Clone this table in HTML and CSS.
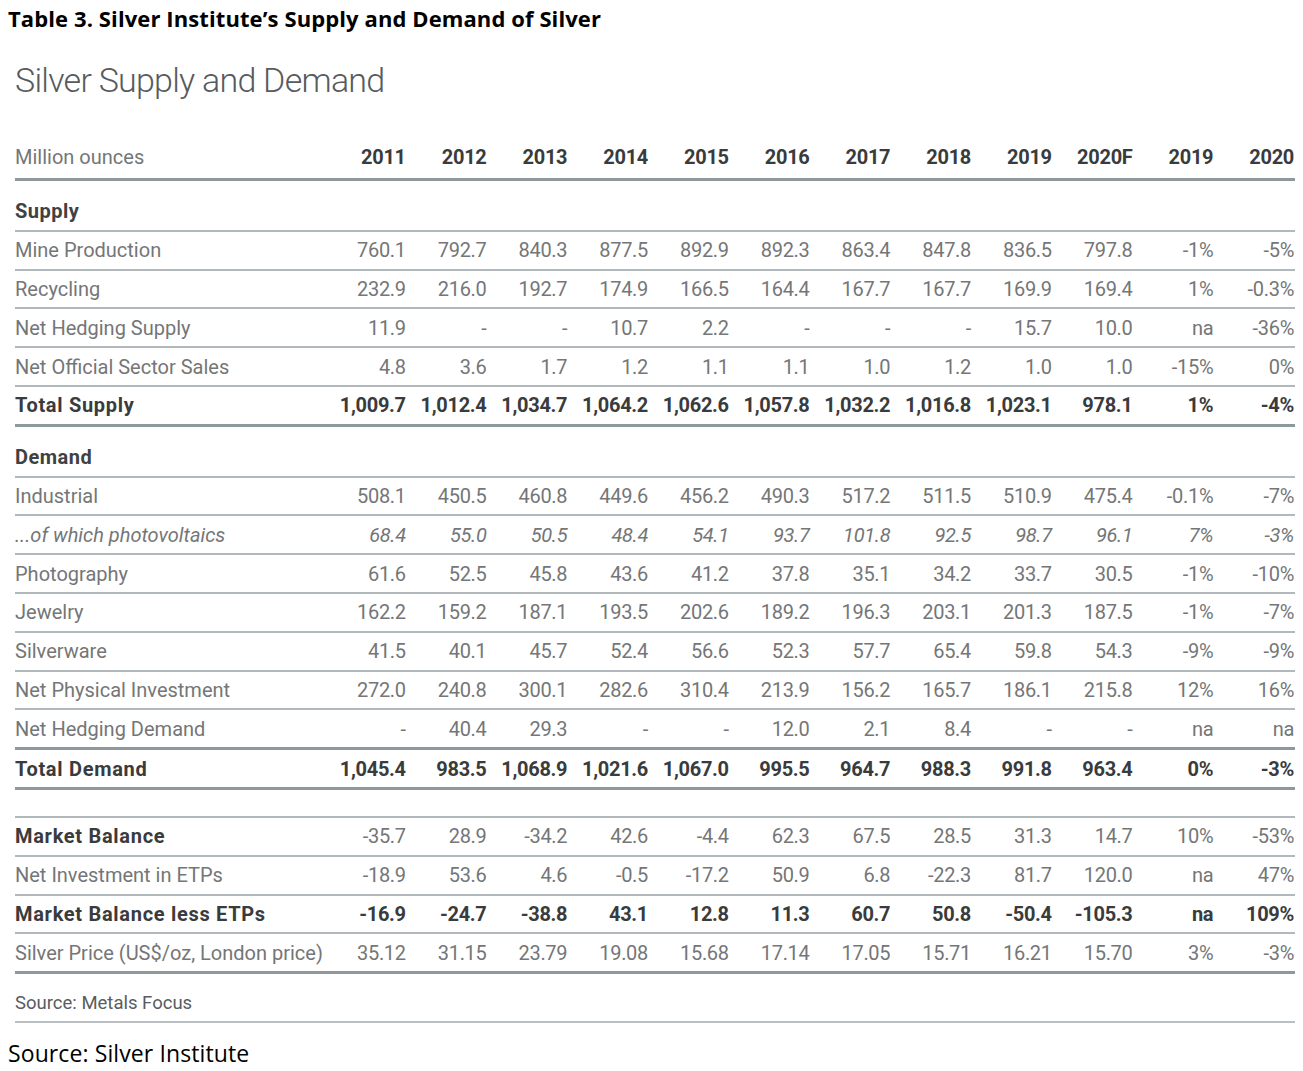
FILE: index.html
```html
<!DOCTYPE html>
<html lang="en">
<head>
<meta charset="utf-8">
<title>Silver Supply and Demand</title>
<link rel="stylesheet" href="styles.css">
</head>
<body>
<h1 class="doc-title">Table 3. Silver Institute’s Supply and Demand of Silver</h1>
<section class="report">
  <h2 class="report-title">Silver Supply and Demand</h2>
  <div class="sd-table">
    <div class="row head thick">
      <div class="label">Million ounces</div>
      <div>2011</div><div>2012</div><div>2013</div><div>2014</div><div>2015</div><div>2016</div><div>2017</div><div>2018</div><div>2019</div><div>2020F</div><div>2019</div><div>2020</div>
    </div>
    <div class="row section"><div class="label">Supply</div></div>
    <div class="row"><div class="label">Mine Production</div><div>760.1</div><div>792.7</div><div>840.3</div><div>877.5</div><div>892.9</div><div>892.3</div><div>863.4</div><div>847.8</div><div>836.5</div><div>797.8</div><div>-1%</div><div>-5%</div></div>
    <div class="row"><div class="label">Recycling</div><div>232.9</div><div>216.0</div><div>192.7</div><div>174.9</div><div>166.5</div><div>164.4</div><div>167.7</div><div>167.7</div><div>169.9</div><div>169.4</div><div>1%</div><div>-0.3%</div></div>
    <div class="row"><div class="label">Net Hedging Supply</div><div>11.9</div><div>-</div><div>-</div><div>10.7</div><div>2.2</div><div>-</div><div>-</div><div>-</div><div>15.7</div><div>10.0</div><div>na</div><div>-36%</div></div>
    <div class="row"><div class="label">Net Official Sector Sales</div><div>4.8</div><div>3.6</div><div>1.7</div><div>1.2</div><div>1.1</div><div>1.1</div><div>1.0</div><div>1.2</div><div>1.0</div><div>1.0</div><div>-15%</div><div>0%</div></div>
    <div class="row total thick"><div class="label">Total Supply</div><div>1,009.7</div><div>1,012.4</div><div>1,034.7</div><div>1,064.2</div><div>1,062.6</div><div>1,057.8</div><div>1,032.2</div><div>1,016.8</div><div>1,023.1</div><div>978.1</div><div>1%</div><div>-4%</div></div>
    <div class="row section"><div class="label">Demand</div></div>
    <div class="row"><div class="label">Industrial</div><div>508.1</div><div>450.5</div><div>460.8</div><div>449.6</div><div>456.2</div><div>490.3</div><div>517.2</div><div>511.5</div><div>510.9</div><div>475.4</div><div>-0.1%</div><div>-7%</div></div>
    <div class="row italic"><div class="label">...of which photovoltaics</div><div>68.4</div><div>55.0</div><div>50.5</div><div>48.4</div><div>54.1</div><div>93.7</div><div>101.8</div><div>92.5</div><div>98.7</div><div>96.1</div><div>7%</div><div>-3%</div></div>
    <div class="row"><div class="label">Photography</div><div>61.6</div><div>52.5</div><div>45.8</div><div>43.6</div><div>41.2</div><div>37.8</div><div>35.1</div><div>34.2</div><div>33.7</div><div>30.5</div><div>-1%</div><div>-10%</div></div>
    <div class="row"><div class="label">Jewelry</div><div>162.2</div><div>159.2</div><div>187.1</div><div>193.5</div><div>202.6</div><div>189.2</div><div>196.3</div><div>203.1</div><div>201.3</div><div>187.5</div><div>-1%</div><div>-7%</div></div>
    <div class="row"><div class="label">Silverware</div><div>41.5</div><div>40.1</div><div>45.7</div><div>52.4</div><div>56.6</div><div>52.3</div><div>57.7</div><div>65.4</div><div>59.8</div><div>54.3</div><div>-9%</div><div>-9%</div></div>
    <div class="row"><div class="label">Net Physical Investment</div><div>272.0</div><div>240.8</div><div>300.1</div><div>282.6</div><div>310.4</div><div>213.9</div><div>156.2</div><div>165.7</div><div>186.1</div><div>215.8</div><div>12%</div><div>16%</div></div>
    <div class="row thick"><div class="label">Net Hedging Demand</div><div>-</div><div>40.4</div><div>29.3</div><div>-</div><div>-</div><div>12.0</div><div>2.1</div><div>8.4</div><div>-</div><div>-</div><div>na</div><div>na</div></div>
    <div class="row total thick"><div class="label">Total Demand</div><div>1,045.4</div><div>983.5</div><div>1,068.9</div><div>1,021.6</div><div>1,067.0</div><div>995.5</div><div>964.7</div><div>988.3</div><div>991.8</div><div>963.4</div><div>0%</div><div>-3%</div></div>
    <div class="row spacer"></div>
    <div class="row bold-label"><div class="label">Market Balance</div><div>-35.7</div><div>28.9</div><div>-34.2</div><div>42.6</div><div>-4.4</div><div>62.3</div><div>67.5</div><div>28.5</div><div>31.3</div><div>14.7</div><div>10%</div><div>-53%</div></div>
    <div class="row"><div class="label">Net Investment in ETPs</div><div>-18.9</div><div>53.6</div><div>4.6</div><div>-0.5</div><div>-17.2</div><div>50.9</div><div>6.8</div><div>-22.3</div><div>81.7</div><div>120.0</div><div>na</div><div>47%</div></div>
    <div class="row total"><div class="label">Market Balance less ETPs</div><div>-16.9</div><div>-24.7</div><div>-38.8</div><div>43.1</div><div>12.8</div><div>11.3</div><div>60.7</div><div>50.8</div><div>-50.4</div><div>-105.3</div><div>na</div><div>109%</div></div>
    <div class="row thick"><div class="label">Silver Price (US$/oz, London price)</div><div>35.12</div><div>31.15</div><div>23.79</div><div>19.08</div><div>15.68</div><div>17.14</div><div>17.05</div><div>15.71</div><div>16.21</div><div>15.70</div><div>3%</div><div>-3%</div></div>
    <div class="row source"><div class="label">Source: Metals Focus</div></div>
  </div>
</section>
<p class="doc-source">Source: Silver Institute</p>
</body>
</html>
```
FILE: styles.css
```css
html, body {
  margin: 0;
  padding: 0;
  background: #ffffff;
}

.doc-title {
  margin: 0;
  padding: 3px 8px 0;
  font-family: "Open Sans", Lato, sans-serif;
  font-weight: 700;
  font-size: 22px;
  line-height: 30px;
  letter-spacing: 0.1px;
  color: #000;
}

.report {
  padding: 0 8px 0 15px;
  font-family: Roboto, "Liberation Sans", sans-serif;
}

.report-title {
  margin: 25px 0 0;
  font-family: Roboto, "Liberation Sans", sans-serif;
  font-weight: 300;
  font-size: 34px;
  line-height: 44px;
  letter-spacing: -0.75px;
  color: #575b5e;
}

.sd-table {
  margin-top: 33px;
  width: 1280px;
}

.row {
  display: grid;
  grid-template-columns: 310px repeat(12, 80.75px);
  align-items: center;
  height: 36.8px;
  border-bottom: 2px solid #b2b9bc;
  font-size: 20px;
  color: #747677;
  letter-spacing: -0.3px;
}

.row > div {
  text-align: right;
  white-space: nowrap;
}

.row > .label {
  text-align: left;
  letter-spacing: 0;
}

.row.thick {
  border-bottom: 3px solid #8f989c;
}

.row.head {
  height: 43px;
  color: #3a3b3c;
  font-weight: 700;
}

.row.head > .label {
  font-weight: 400;
  color: #747677;
}

.row.section {
  padding-top: 12px;
  font-weight: 700;
  color: #3f4142;
}

.row.section > .label {
  letter-spacing: 0.5px;
}

.row.total {
  font-weight: 700;
  color: #3a3b3c;
}

.row.total > .label,
.row.bold-label > .label {
  letter-spacing: 0.7px;
}

.row.bold-label > .label {
  font-weight: 700;
  color: #3a3b3c;
}

.row.italic {
  font-style: italic;
}

.row.spacer {
  height: 26px;
}

.row.source {
  height: 37px;
  padding-top: 10px;
  font-size: 18.5px;
  color: #5a5c5e;
  border-bottom-color: #b9bfc2;
}

.row.source > .label {
  letter-spacing: 0;
}

.doc-source {
  margin: 15px 0 0;
  padding: 0 8px;
  font-family: "Open Sans", Lato, sans-serif;
  font-size: 23px;
  line-height: 30px;
  letter-spacing: 0.1px;
  color: #000;
}
```
